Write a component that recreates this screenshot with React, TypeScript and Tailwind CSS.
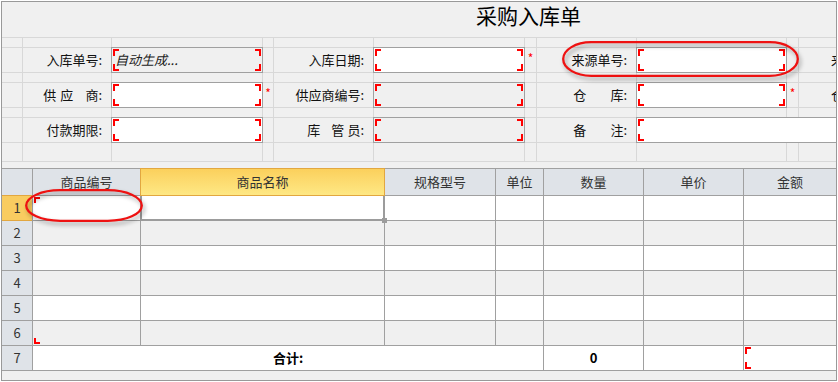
import React from "react";

type MarkProps = { tl?: boolean; tr?: boolean; bl?: boolean; br?: boolean };

function Marks({ tl, tr, bl, br }: MarkProps) {
  return (
    <>
      {tl && <span className="absolute left-px top-px w-[6px] h-[7px] border-l-2 border-t-2 border-[#ff0000]" />}
      {tr && <span className="absolute right-px top-px w-[6px] h-[7px] border-r-2 border-t-2 border-[#ff0000]" />}
      {bl && <span className="absolute left-px bottom-px w-[6px] h-[7px] border-l-2 border-b-2 border-[#ff0000]" />}
      {br && <span className="absolute right-px bottom-px w-[6px] h-[7px] border-r-2 border-b-2 border-[#ff0000]" />}
    </>
  );
}

function Empty() {
  return <div className="bg-[#f0f0f0]" />;
}

function Label({ children }: { children: React.ReactNode }) {
  return (
    <div className="bg-[#f0f0f0] flex items-center justify-end pr-[9px] text-[13px] text-[#111] whitespace-nowrap">
      {children}
    </div>
  );
}

function CutLabel({ text }: { text: string }) {
  return (
    <div className="bg-[#f0f0f0] flex items-center pl-[32px] text-[13px] text-[#111] whitespace-nowrap overflow-hidden">
      {text}
    </div>
  );
}

function Star() {
  return (
    <div className="bg-[#f0f0f0] flex items-center justify-center text-[12px] text-[#ff0000] leading-none pb-[5px]">
      *
    </div>
  );
}

function Field({ gray, wide, children }: { gray?: boolean; wide?: boolean; children?: React.ReactNode }) {
  return (
    <div
      className={`relative z-10 -m-px border border-[#a0a0a0] flex items-center ${gray ? "bg-[#f0f0f0]" : "bg-white"} ${wide ? "col-span-3" : ""}`}
    >
      <Marks tl tr={!wide} bl br={!wide} />
      {children}
    </div>
  );
}

function GapRow() {
  return (
    <>
      {Array.from({ length: 11 }).map((_, i) => (
        <Empty key={i} />
      ))}
    </>
  );
}

const headers = ["商品编号", "商品名称", "规格型号", "单位", "数量", "单价", "金额"];

export default function App() {
  return (
    <div className="bg-white w-[838px] h-[382px] font-['Noto_Sans_CJK_SC','Noto_Sans',sans-serif]">
      <div className="relative ml-px mt-px w-[836px] h-[380px] border border-[#999] bg-[#f0f0f0] overflow-hidden flex flex-col">
        {/* title */}
        <div className="h-[35px] pl-[474px] text-[21px] leading-[26px] text-black">采购入库单</div>

        {/* form grid */}
        <div className="grid grid-cols-[20px_88px_150px_10px_99px_150px_11px_99px_149px_11px_37px] grid-rows-[9px_24px_9px_24px_9px_24px_18px] gap-px bg-[#d8d8d8] border-y border-[#d8d8d8]">
          <GapRow />
          {/* row 1 */}
          <Empty />
          <Label>入库单号:</Label>
          <Field gray>
            <span className="pl-[3px] text-[13px] italic text-[#222]">自动生成...</span>
          </Field>
          <Empty />
          <Label>入库日期:</Label>
          <Field />
          <Star />
          <Label>来源单号:</Label>
          <Field />
          <Empty />
          <CutLabel text="来源仓库:" />
          <GapRow />
          {/* row 2 */}
          <Empty />
          <Label>
            <span className="mr-[4px]">供</span>
            <span className="mr-[12px]">应</span>
            <span>商:</span>
          </Label>
          <Field />
          <Star />
          <Label>供应商编号:</Label>
          <Field gray />
          <Empty />
          <Label>
            <span className="mr-[24px]">仓</span>
            <span>库:</span>
          </Label>
          <Field />
          <Star />
          <CutLabel text="仓库名称:" />
          <GapRow />
          {/* row 3 */}
          <Empty />
          <Label>付款期限:</Label>
          <Field />
          <Empty />
          <Label>
            <span className="mr-[11px]">库</span>
            <span className="mr-[3px]">管</span>
            <span>员:</span>
          </Label>
          <Field gray />
          <Empty />
          <Label>
            <span className="mr-[24px]">备</span>
            <span>注:</span>
          </Label>
          <Field wide />
          <GapRow />
        </div>

        <div className="h-[6px]" />

        {/* table */}
        <div className="grid grid-cols-[30px_107px_243px_110px_47px_99px_99px_92px] grid-rows-[26px_repeat(7,24px)] gap-px bg-[#a0a0a0] border-y border-[#a0a0a0] text-[13px] text-[#333]">
          <div className="bg-[#dfe3e8]" />
          {headers.map((h, i) =>
            i === 1 ? (
              <div
                key={h}
                className="relative z-10 -m-px border border-[#e2a740] bg-linear-to-b from-[#fbd05c] to-[#fee884] flex items-center justify-center"
              >
                {h}
              </div>
            ) : (
              <div key={h} className="bg-[#dfe3e8] flex items-center justify-center">
                {h}
              </div>
            )
          )}

          {[1, 2, 3, 4, 5, 6].map((r) => {
            const bg = r % 2 === 1 ? "bg-white" : "bg-[#f0f0f0]";
            return (
              <React.Fragment key={r}>
                {r === 1 ? (
                  <div className="relative z-10 -my-px border-y border-[#e2a740] bg-[#f9cc60] flex items-center justify-center">
                    {r}
                  </div>
                ) : (
                  <div className="bg-[#dfe3e8] flex items-center justify-center">{r}</div>
                )}
                <div className={`relative ${bg}`}>
                  {r === 1 && <span className="absolute left-px top-px w-[6px] h-[6px] border-l-2 border-t-2 border-[#ff0000]" />}
                  {r === 6 && <span className="absolute left-px bottom-px w-[6px] h-[6px] border-l-2 border-b-2 border-[#ff0000]" />}
                </div>
                {r === 1 ? (
                  <div className="relative z-10 -ml-px -mr-px -mb-px border-l-2 border-r-2 border-b-2 border-[#9c9c9c] bg-white">
                    <span className="absolute -right-[4px] -bottom-[4px] w-[5px] h-[5px] bg-[#9c9c9c]" />
                  </div>
                ) : (
                  <div className={bg} />
                )}
                <div className={bg} />
                <div className={bg} />
                <div className={bg} />
                <div className={bg} />
                <div className={bg} />
              </React.Fragment>
            );
          })}

          {/* total row */}
          <div className="bg-[#dfe3e8] flex items-center justify-center">7</div>
          <div className="col-span-4 bg-white flex items-center justify-center font-bold text-black">合计:</div>
          <div className="bg-white flex items-center justify-center font-bold text-black">0</div>
          <div className="bg-white" />
          <div className="relative bg-white">
            <Marks tl bl />
          </div>
        </div>

        {/* annotations */}
        <svg
          className="absolute left-[560px] top-[39px] z-20 pointer-events-none drop-shadow-[2px_3px_2px_rgba(0,0,0,0.35)]"
          width="237"
          height="36"
        >
          <rect x="1.2" y="1.2" width="234.6" height="33.6" rx="28" ry="16.8" fill="none" stroke="#ee1111" strokeWidth="2.3" />
        </svg>
        <svg
          className="absolute left-[23px] top-[187px] z-20 pointer-events-none drop-shadow-[2px_3px_2px_rgba(0,0,0,0.35)]"
          width="118"
          height="33"
        >
          <rect x="1.2" y="1.2" width="115.6" height="30.6" rx="34" ry="15.3" fill="none" stroke="#ee1111" strokeWidth="2.3" />
        </svg>
      </div>
    </div>
  );
}
